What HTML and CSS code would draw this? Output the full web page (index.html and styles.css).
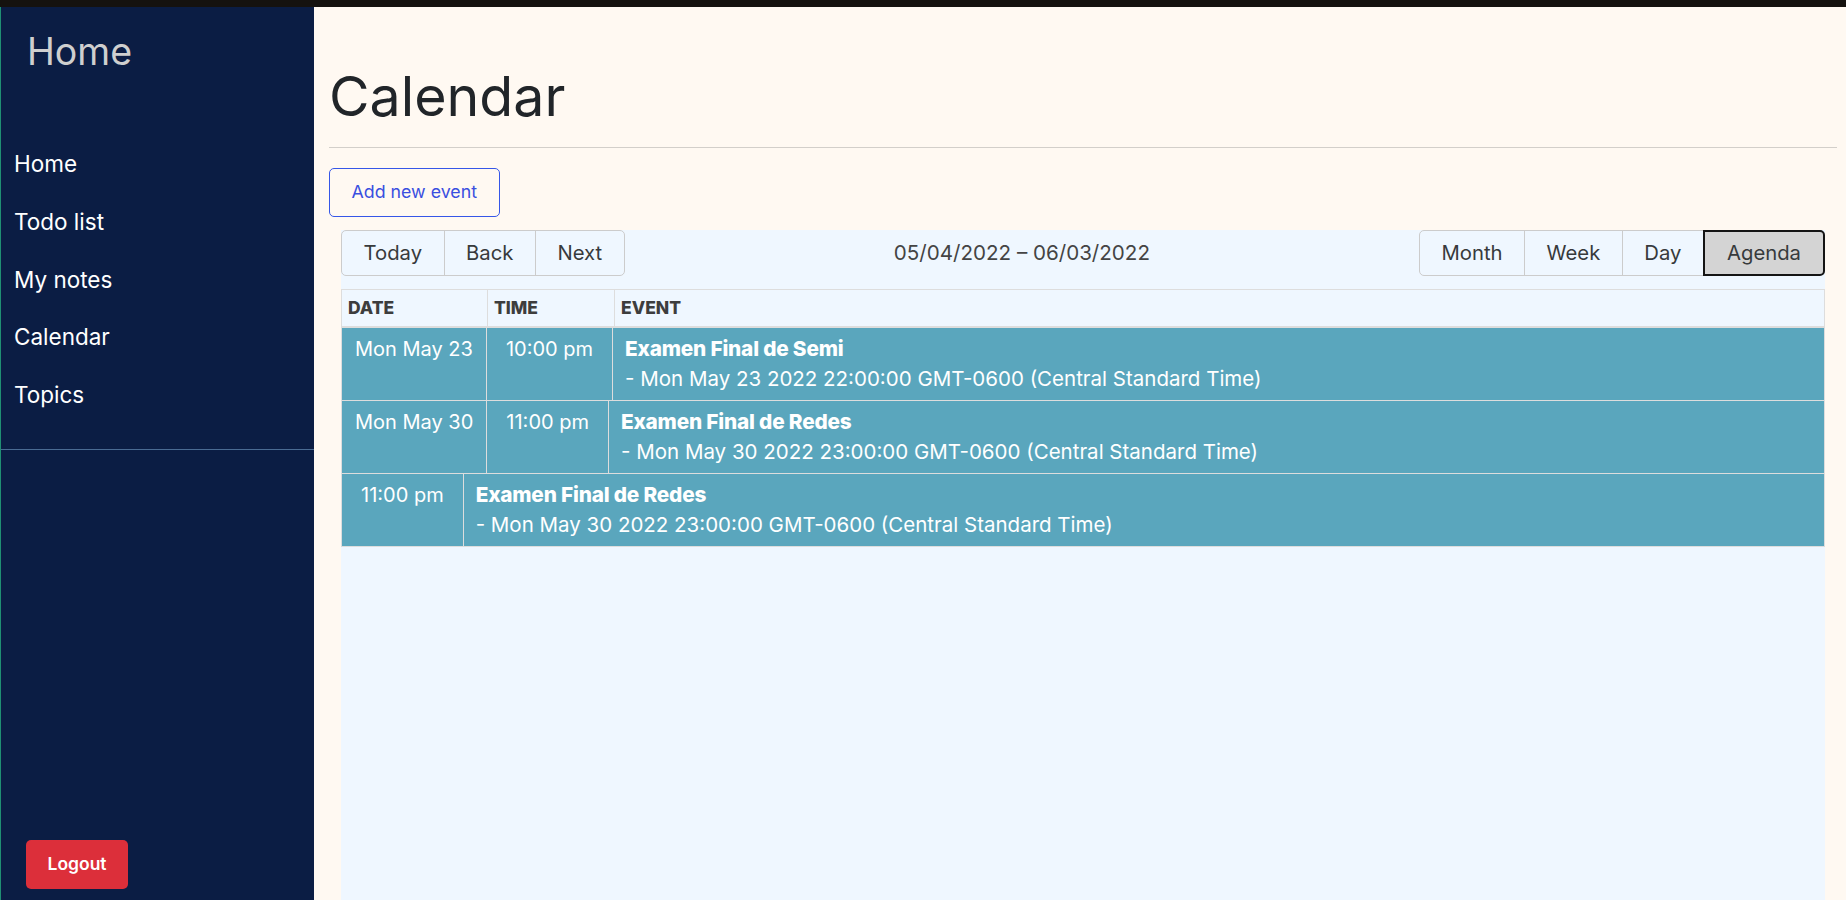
FILE: index.html
```html
<!DOCTYPE html>
<html lang="en">
<head>
<meta charset="utf-8">
<title>Calendar</title>
<link rel="stylesheet" href="styles.css">
</head>
<body>
<div class="topbar"></div>
<div class="layout">
  <aside class="sidebar">
    <div class="brand">Home</div>
    <nav class="nav">
      <a class="nav-link" href="#">Home</a>
      <a class="nav-link" href="#">Todo list</a>
      <a class="nav-link" href="#">My notes</a>
      <a class="nav-link" href="#">Calendar</a>
      <a class="nav-link" href="#">Topics</a>
    </nav>
    <div class="side-divider"></div>
    <div class="side-spacer"></div>
    <button class="logout">Logout</button>
  </aside>
  <main class="main">
    <h1 class="page-title">Calendar</h1>
    <div class="rule"></div>
    <div class="actions"><button class="add-btn">Add new event</button></div>
    <section class="calendar">
      <div class="toolbar">
        <div class="btn-group">
          <button class="tb-btn">Today</button>
          <button class="tb-btn">Back</button>
          <button class="tb-btn">Next</button>
        </div>
        <span class="tb-label">05/04/2022 – 06/03/2022</span>
        <div class="btn-group">
          <button class="tb-btn">Month</button>
          <button class="tb-btn">Week</button>
          <button class="tb-btn">Day</button>
          <button class="tb-btn active">Agenda</button>
        </div>
      </div>
      <div class="agenda">
        <div class="agenda-head">
          <div class="hcell hdate">Date</div>
          <div class="hcell htime">Time</div>
          <div class="hcell hevent">Event</div>
        </div>
        <div class="agenda-row">
          <div class="cell date">Mon May 23</div>
          <div class="cell time">10:00 pm</div>
          <div class="cell event"><strong>Examen Final de Semi</strong><br>- Mon May 23 2022 22:00:00 GMT-0600 (Central Standard Time)</div>
        </div>
        <div class="agenda-row">
          <div class="cell date">Mon May 30</div>
          <div class="cell time">11:00 pm</div>
          <div class="cell event"><strong>Examen Final de Redes</strong><br>- Mon May 30 2022 23:00:00 GMT-0600 (Central Standard Time)</div>
        </div>
        <div class="agenda-row">
          <div class="cell time first">11:00 pm</div>
          <div class="cell event"><strong>Examen Final de Redes</strong><br>- Mon May 30 2022 23:00:00 GMT-0600 (Central Standard Time)</div>
        </div>
      </div>
    </section>
  </main>
</div>
</body>
</html>
```

FILE: styles.css
```css
* { box-sizing: border-box; }
html, body { margin: 0; padding: 0; height: 100%; }
body {
  font-family: Inter, "Noto Sans", sans-serif;
  font-size: 20px;
  line-height: 1.5;
  background: #fff9f2;
  overflow: hidden;
}
.topbar { height: 7px; background: #15120f; }
.layout { display: flex; height: 893px; }

.sidebar {
  width: 314px;
  flex: none;
  background: #0b1d44;
  border-left: 1px solid #1f8f73;
  display: flex;
  flex-direction: column;
}
.brand {
  color: #cfcfcf;
  font-size: 37.5px;
  line-height: 45px;
  padding: 22px 0 0 26px;
}
.nav { display: flex; flex-direction: column; margin-top: 61px; }
.nav-link {
  color: #ffffff;
  text-decoration: none;
  font-size: 22.5px;
  line-height: 33.75px;
  padding: 12px 13px;
}
.side-divider { height: 1px; background: #4a6b93; margin-top: 25px; }
.side-spacer { flex: 1; }
.logout {
  align-self: flex-start;
  margin: 0 0 11px 25px;
  background: #dc2f3a;
  color: #fff;
  border: none;
  border-radius: 5px;
  font-family: inherit;
  font-weight: 600;
  font-size: 17.5px;
  line-height: 26.25px;
  padding: 11.4px 21.5px;
}

.main {
  flex: 1;
  display: flex;
  flex-direction: column;
  padding: 0 9px 0 15px;
  min-width: 0;
}
.page-title {
  margin: 56px 0 19px;
  font-weight: 400;
  font-size: 55.5px;
  line-height: 65px;
  color: #212529;
}
.rule { height: 1px; background: #d3cfca; }
.actions { margin: 20px 0 13px; }
.add-btn {
  font-family: inherit;
  font-size: 17.8px;
  line-height: 26.25px;
  padding: 10.4px 21.5px;
  color: #3a4fe0;
  background: transparent;
  border: 1px solid #3657e8;
  border-radius: 5px;
}

.calendar {
  flex: 1;
  margin: 0 12px;
  background: #eff7ff;
  display: flex;
  flex-direction: column;
  color: #373a3c;
}
.toolbar {
  display: flex;
  align-items: center;
  margin-bottom: 13px;
}
.btn-group { display: flex; }
.tb-btn {
  font-family: inherit;
  font-size: 20.3px;
  line-height: 30px;
  padding: 7px 21.5px;
  color: #373a3c;
  background: transparent;
  border: 1px solid #cccccc;
  margin-left: -1px;
}
.btn-group .tb-btn:first-child { border-radius: 5px 0 0 5px; margin-left: 0; }
.btn-group .tb-btn:last-child { border-radius: 0 5px 5px 0; }
.tb-btn.active {
  background: #d4d4d4;
  border: 2px solid #141414;
  border-radius: 5px;
  padding: 6px 22px;
  position: relative;
}
.tb-label { flex: 1; text-align: center; color: #444; font-size: 20.6px; }

.agenda { border: 1px solid #dddddd; border-bottom: none; }
.agenda-head { display: flex; border-bottom: 2px solid #dddddd; }
.hcell {
  font-size: 17.5px;
  font-weight: 800;
  text-transform: uppercase;
  line-height: 26.25px;
  padding: 5px 6px;
  color: #3d3d3d;
}
.hdate { width: 145px; }
.htime { width: 127px; border-left: 1px solid #dddddd; }
.hevent { flex: 1; border-left: 1px solid #dddddd; }

.agenda-row {
  display: flex;
  background: #5aa6bd;
  color: #ffffff;
  border-bottom: 1px solid #dddddd;
}
.cell { padding: 6px 13px; line-height: 30px; white-space: nowrap; }
.cell.date { padding: 6px 13px; }
.cell.time { padding: 6px 19px; border-left: 1px solid #dddddd; }
.cell.time.first { border-left: none; }
.cell.event { flex: 1; border-left: 1px solid #dddddd; font-size: 20.5px; padding: 6px 12px; }
.cell.event strong { font-weight: 800; font-size: 20.8px; letter-spacing: -0.2px; }
```
